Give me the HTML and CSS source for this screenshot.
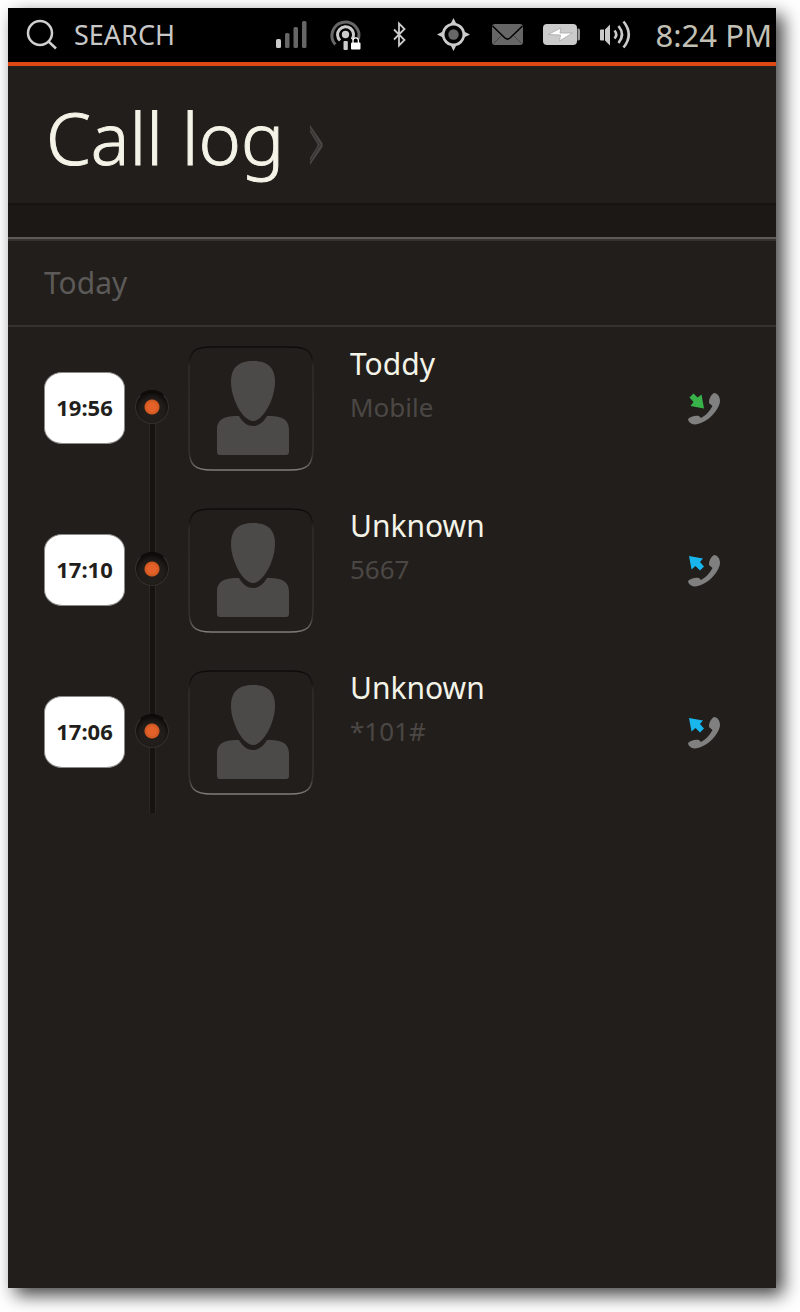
FILE: index.html
```html
<!DOCTYPE html>
<html lang="en">
<head>
<meta charset="utf-8">
<meta name="viewport" content="width=device-width, initial-scale=1">
<title>Call log</title>
<link rel="stylesheet" href="styles.css">
</head>
<body>
<svg class="defs" aria-hidden="true">
  <symbol id="person" viewBox="0 0 126 126">
    <path d="M1 24C1 6 6 2 24 2h78c18 0 23 4 23 22v78c0 18-5 23-23 23H24C6 125 1 120 1 102z" fill="none" stroke="url(#rim)" stroke-width="1.4"/>
    <path d="M65 16c14 0 22 6 22 21 0 17-12 39-22 39S43 54 43 37c0-15 8-21 22-21z"/>
    <path d="M51 71c4 7 9 10 14 10s10-3 14-10c13 0 22 2 22 14v22q0 3-3 3H32q-3 0-3-3V85c0-12 9-14 22-14z"/>
  </symbol>
  <symbol id="handset" viewBox="0 0 32 34">
    <path d="M26 2C29 2 32 5 32 10C32 16 24 27 15 31C11 33 7 34 4 33C2 32 0 30 0 28C2 26 7 24 11 25L13 27C17 25 22 20 24.500 15L21 12C21 7 23 4 26 2z"/>
  </symbol>
  <defs>
    <linearGradient id="rim" x1="0" y1="0" x2="0" y2="1">
      <stop offset="0" stop-color="#0d0b0a"/>
      <stop offset=".1" stop-color="#171412"/>
      <stop offset=".16" stop-color="#302d2a"/>
      <stop offset=".88" stop-color="#35322f"/>
      <stop offset="1" stop-color="#817d78"/>
    </linearGradient>
  </defs>
</svg>

<div class="phone">
  <header class="status">
    <button class="search" type="button">
      <svg class="search-icon" viewBox="0 0 32 32" aria-hidden="true"><circle cx="14" cy="14" r="12"/><path d="M22.500 22.500 30 29.500"/></svg>
      <span>SEARCH</span>
    </button>
    <div class="indicators">
      <svg class="indicator" viewBox="0 0 54 54" role="img" aria-label="Signal">
        <rect class="lit" x="12" y="31" width="5" height="9" rx="1.500"/>
        <rect class="dim" x="21" y="25" width="4.500" height="15" rx="1.500"/>
        <rect class="dim" x="29.500" y="19" width="4.500" height="21" rx="1.500"/>
        <rect class="dim" x="38" y="13" width="4.500" height="27" rx="1.500"/>
      </svg>
      <svg class="indicator" viewBox="0 0 54 54" role="img" aria-label="Hotspot">
        <path class="dim-line" d="M17.300 36.500A13.500 13.500 0 1 1 40.500 31"/>
        <path class="lit-line" d="M22 32.500A8 8 0 1 1 34 31.500"/>
        <circle class="lit" cx="27.500" cy="26.500" r="3.700"/>
        <rect class="lit" x="25.500" y="33" width="4.300" height="9" rx="1"/>
        <rect class="white" x="33" y="34.500" width="9.500" height="7" rx="1"/>
        <path class="shackle" d="M35 35v-2.500a2.700 2.700 0 0 1 5.400 0V35"/>
      </svg>
      <svg class="indicator" viewBox="0 0 54 54" role="img" aria-label="Bluetooth">
        <path class="thin-line" d="M22 21.500 32.500 32l-5.500 5.500V15.500l5.500 5.500L22 31.500"/>
      </svg>
      <svg class="indicator" viewBox="0 0 54 54" role="img" aria-label="Location">
        <path class="lit" fill-rule="evenodd" d="M27.500 10l2.500 5q7 1.500 9 9l5 2.500-5 2.500q-2 7.500-9 9l-2.500 5-2.500-5q-7-1.500-9-9l-5-2.500 5-2.500q2-7.500 9-9zM27.500 17.500a9 9 0 1 0 .01 0z"/>
        <circle class="dim" cx="27.500" cy="26.500" r="5.200"/>
      </svg>
      <svg class="indicator" viewBox="0 0 54 54" role="img" aria-label="Messages">
        <rect class="dim" x="12" y="16" width="31" height="21" rx="3"/>
        <path class="mail-fold" d="M12.500 18 25 30q2.500 2 5 0l12.500-12"/>
        <path class="mail-crease" d="M21 28l-7 7M34 28l7 7"/>
      </svg>
      <svg class="indicator" viewBox="0 0 54 54" role="img" aria-label="Battery charging">
        <rect class="lit" x="9" y="16" width="34" height="21" rx="4"/>
        <path class="battery-tip" d="M43.500 20.500h1q1.500 0 1.500 2v8q0 2-1.500 2h-1z"/>
        <path class="bolt" d="M14 26.500l13-6.500-1 5h12.500L25.500 33l1-6z"/>
      </svg>
      <svg class="indicator" viewBox="0 0 54 54" role="img" aria-label="Volume">
        <path class="lit" d="M12 22.500q0-1 1-1h3v11h-3q-1 0-1-1zM17 21.500l5-5v21l-5-5z"/>
        <path class="sound-line" d="M26.500 22.500q3.500 4 0 8M30.500 18q7 8.500 0 17M35.500 13.500q10.500 13 0 26"/>
      </svg>
    </div>
    <time class="clock" datetime="20:24">8:24 PM</time>
  </header>

  <main>
    <div class="title">
      <h1 class="title-text">Call log</h1>
      <svg class="chevron" viewBox="0 0 13 40" aria-hidden="true"><path class="chevron-fill" d="M0 0 12.500 18v4L0 40v-7l7.500-12v-2L0 7z"/><path class="chevron-cut" d="M0 3.500 10 19.500v1L0 36.500"/></svg>
    </div>
    <div class="strip"></div>
    <h2 class="day">Today</h2>
    <ol class="calls">
      <li class="call">
        <time class="badge" datetime="19:56">19:56</time>
        <span class="track first"><span class="dot"></span></span>
        <svg class="avatar" aria-hidden="true"><use href="#person"/></svg>
        <div class="who"><span class="name">Toddy</span><span class="detail">Mobile</span></div>
        <button class="dial" type="button" aria-label="Incoming call, call Toddy">
          <svg class="dial-icon" viewBox="0 0 32 34"><use href="#handset" width="32" height="34"/><path class="incoming" d="M1.500 6.500 5.500 2.500l4 4 4-3 2.500 14-13.500-2.500 3-4z"/></svg>
        </button>
      </li>
      <li class="call">
        <time class="badge" datetime="17:10">17:10</time>
        <span class="track"><span class="dot"></span></span>
        <svg class="avatar" aria-hidden="true"><use href="#person"/></svg>
        <div class="who"><span class="name">Unknown</span><span class="detail">5667</span></div>
        <button class="dial" type="button" aria-label="Outgoing call, call 5667">
          <svg class="dial-icon" viewBox="0 0 32 34"><use href="#handset" width="32" height="34"/><path class="outgoing" d="M1 3l14 2.500-3 3.500 4 4.500-4 4-4.500-4.500-4 3.500z"/></svg>
        </button>
      </li>
      <li class="call">
        <time class="badge" datetime="17:06">17:06</time>
        <span class="track"><span class="dot"></span></span>
        <svg class="avatar" aria-hidden="true"><use href="#person"/></svg>
        <div class="who"><span class="name">Unknown</span><span class="detail">*101#</span></div>
        <button class="dial" type="button" aria-label="Outgoing call, call *101#">
          <svg class="dial-icon" viewBox="0 0 32 34"><use href="#handset" width="32" height="34"/><path class="outgoing" d="M1 3l14 2.500-3 3.500 4 4.500-4 4-4.500-4.500-4 3.500z"/></svg>
        </button>
      </li>
    </ol>
  </main>
</div>
</body>
</html>
```

FILE: styles.css
```css
* { box-sizing: border-box; }

body {
  display: flex;
  min-height: 100vh;
  margin: 0;
  padding: 8px 24px 24px 8px;
  background: #fff;
  font-family: "Noto Sans", "Open Sans", sans-serif;
}

button {
  padding: 0;
  border: 0;
  background: none;
  color: inherit;
  font: inherit;
  cursor: pointer;
}

.defs { position: absolute; width: 0; height: 0; }

.phone {
  flex: 1;
  min-width: 0;
  background: #221e1b;
  box-shadow: 7px 7px 17px rgba(0, 0, 0, .75);
}

/* Status bar */
.status {
  display: flex;
  align-items: center;
  height: 58px;
  border-bottom: 4px solid #dd4814;
  background: #000;
  color: #c8c8c8;
}

.search {
  display: flex;
  align-items: center;
  gap: 16px;
  padding-left: 18px;
  font-size: 27px;
  line-height: 54px;
}

.search-icon {
  width: 32px;
  height: 32px;
  fill: none;
  stroke: #d0d0d0;
  stroke-width: 2.5;
}

.indicators { display: flex; margin-left: auto; }
.indicator { width: 54px; height: 54px; }
.lit { fill: #cbcbcb; }
.dim { fill: #666; }
.white { fill: #fff; }
.dim-line, .lit-line, .thin-line, .sound-line, .shackle { fill: none; stroke: #cbcbcb; }
.dim-line { stroke: #666; stroke-width: 3; }
.lit-line { stroke-width: 3; }
.thin-line { stroke-width: 1.8; }
.sound-line { stroke-width: 2.6; }
.shackle { stroke: #fff; stroke-width: 1.3; }
.mail-fold { fill: none; stroke: #000; stroke-width: 1.5; }
.mail-crease { fill: none; stroke: #444; stroke-width: 1; }
.battery-tip { fill: #999; }
.bolt { fill: #fff; stroke: #aaa; stroke-width: .8; }

.clock {
  padding: 0 4px 0 14px;
  color: #c2c0b5;
  font-size: 31px;
  line-height: 54px;
  white-space: nowrap;
}

/* Page title */
.title {
  display: flex;
  align-items: center;
  gap: 26px;
  height: 137px;
  padding: 0 38px;
  color: #f3f3e7;
}

.title-text {
  margin: 0;
  padding-top: 4px;
  font-size: 72px;
  font-weight: 300;
  line-height: 120px;
  -webkit-text-stroke: 1px;
}

.chevron { width: 13px; height: 40px; margin-top: 20px; }
.chevron-fill { fill: #484644; }
.chevron-cut { fill: none; stroke: #302d2a; stroke-width: 1; }

.strip {
  height: 36px;
  border-top: 2px solid #181412;
  border-bottom: 2px solid #5c5a57;
  background: #1c1815;
}

.day {
  margin: 0;
  padding: 0 36px;
  border-top: 2px solid #35322f;
  border-bottom: 2px solid #35322f;
  color: #5c5a58;
  font-size: 30px;
  font-weight: 400;
  line-height: 84px;
}

/* Call list */
.calls { margin: 0; padding: 0; list-style: none; }

.call {
  display: grid;
  grid-template-columns: 81px 34px 126px 1fr 32px;
  height: 162px;
  padding: 0 56px 0 36px;
  align-items: center;
}

.badge {
  height: 72px;
  border: 1px solid #8c8a88;
  border-radius: 18px / 16px;
  background: #fff;
  color: #221e1b;
  font-size: 22px;
  font-weight: 700;
  line-height: 68px;
  text-align: center;
}

.track {
  display: grid;
  place-items: center;
  width: 34px;
  height: 100%;
  margin-left: 10px;
  padding-bottom: 2px;
  background: linear-gradient(90deg, #2b2724 1px, #171311 1px 6px, #2b2724 6px) center / 7px 100% no-repeat;
}

.track.first { background-size: 7px 50%; background-position: bottom; }

.dot {
  width: 34px;
  height: 34px;
  border: 1px solid #35302d;
  border-top-color: #0b0908;
  border-radius: 50%;
  background: radial-gradient(circle, #e4622a 0 4px, #cf5720 7px, #221e1b 8px);
  box-shadow: inset 0 4px 5px #0c0a08;
}

.avatar {
  width: 126px;
  height: 126px;
  margin-left: 29px;
  fill: #4c4a48;
}

.who {
  display: flex;
  flex-direction: column;
  align-self: start;
  padding: 15px 0 0 65px;
  white-space: nowrap;
}

.name {
  color: #f3f3e7;
  font-size: 30px;
  line-height: 44px;
}

.detail {
  color: #4a4745;
  font-size: 26px;
  line-height: 42px;
}

.dial { height: 34px; }
.dial-icon { display: block; width: 32px; height: 34px; fill: #808080; }
.incoming { fill: #37b34a; }
.outgoing { fill: #19b6ee; }
```
